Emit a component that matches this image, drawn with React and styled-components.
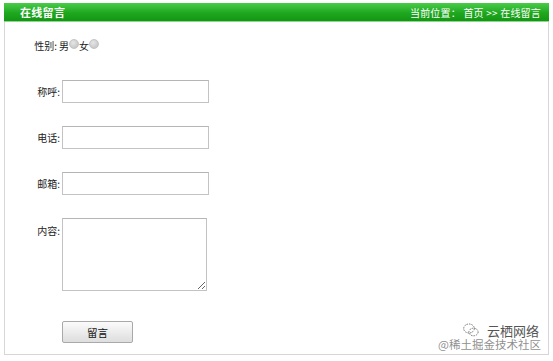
import React from "react";
import styled, { createGlobalStyle } from "styled-components";

const Global = createGlobalStyle`
  html, body { margin: 0; padding: 0; background: #fff; }
  body { font-family: "Noto Sans CJK SC", "Noto Sans", sans-serif; color: #222; }
`;

const Panel = styled.div`
  margin: 3px 0 0 4px;
  width: 543px;
  height: 351px;
  border: 1px solid #d6d6d6;
  border-top: none;
  position: relative;
  box-sizing: content-box;
`;

const Header = styled.div`
  height: 18px;
  margin: 0 -1px;
  display: flex;
  align-items: center;
  justify-content: space-between;
  padding: 0 8px 0 16px;
  background: linear-gradient(#4acc4a, #1fa81f 55%, #149614);
  color: #fff;
  border-bottom: 1px solid #8fd68f;
`;

const Title = styled.div`
  font-size: 11px;
  font-weight: 700;
  letter-spacing: 0.3px;
`;

const Crumb = styled.div`
  font-size: 10px;
  letter-spacing: 0.2px;
`;

const Form = styled.div`
  display: flex;
  flex-direction: column;
  gap: 23px;
  padding-top: 16px;
`;

const Row = styled.div`
  display: flex;
  align-items: ${(p) => (p.$top ? "flex-start" : "center")};
  min-height: ${(p) => p.$h || 16}px;
  margin-bottom: ${(p) => p.$mb || 0}px;
  margin-top: ${(p) => p.$mt || 0}px;
`;

const Label = styled.div`
  width: ${(p) => p.$w || 57}px;
  box-sizing: border-box;
  padding-right: 2px;
  text-align: right;
  font-size: 10px;
  line-height: 14px;
  padding-top: ${(p) => p.$pt || 0}px;
  white-space: nowrap;
  flex-shrink: 0;
`;

const Text = styled.span`
  font-size: 10px;
  line-height: 14px;
`;

const Radio = styled.span`
  display: inline-block;
  width: 8px;
  height: 8px;
  border-radius: 50%;
  background: radial-gradient(circle at 40% 35%, #e6e6e6, #bdbdbd);
  border: 1px solid #c4c4c4;
  margin: 0 0 5px 0;
  vertical-align: middle;
`;

const Input = styled.input`
  box-sizing: border-box;
  width: 147px;
  height: 23px;
  border: 1px solid #c3c3c3;
  border-top-color: #b5b5b5;
  margin: 0;
  padding: 0 3px;
  background: #fff;
  outline: none;
`;

const TextArea = styled.textarea`
  box-sizing: border-box;
  width: 145px;
  height: 73px;
  border: 1px solid #c3c3c3;
  border-top-color: #b5b5b5;
  margin: 0;
  padding: 2px;
  background: #fff;
  outline: none;
  display: block;
`;

const Button = styled.button`
  box-sizing: border-box;
  width: 71px;
  height: 22px;
  margin-left: 57px;
  border: 1px solid #a9a9a9;
  border-radius: 2px;
  background: linear-gradient(#fbfbfb, #ececec 50%, #dedede);
  font-family: "Noto Sans CJK SC", sans-serif;
  font-size: 10.5px;
  color: #111;
  padding: 0;
`;

const Watermark = styled.div`
  position: absolute;
  right: 7px;
  bottom: 4px;
  display: flex;
  flex-direction: column;
  align-items: flex-end;
  gap: 1px;
  pointer-events: none;
`;

const WmTop = styled.div`
  display: flex;
  align-items: center;
  gap: 8px;
  font-size: 13px;
  color: #555;
  line-height: 13px;
  margin-right: 2px;
`;

const WmBottom = styled.div`
  font-size: 11.5px;
  line-height: 12px;
  color: rgba(120,120,120,0.85);
`;

export default function App() {
  return (
    <>
      <Global />
      <Panel>
        <Header>
          <Title>在线留言</Title>
          <Crumb>当前位置：&nbsp;首页 &gt;&gt; 在线留言</Crumb>
        </Header>
        <Form>
          <Row $h={16} $mb={3}>
            <Label $w={54}>性别:</Label>
            <Text>男</Text>
            <Radio />
            <Text>女</Text>
            <Radio />
          </Row>
          <Row>
            <Label>称呼:</Label>
            <Input />
          </Row>
          <Row>
            <Label>电话:</Label>
            <Input />
          </Row>
          <Row>
            <Label>邮箱:</Label>
            <Input />
          </Row>
          <Row $top>
            <Label $pt={6}>内容:</Label>
            <TextArea />
          </Row>
          <Row $mt={7}>
            <Button>留言</Button>
          </Row>
        </Form>
        <Watermark>
          <WmTop>
            <svg width="16" height="14" viewBox="0 0 16 14" fill="none" stroke="#666" strokeWidth="0.9" strokeDasharray="1.5 1">
              <ellipse cx="6" cy="5.5" rx="5.3" ry="4.5" />
              <ellipse cx="10.5" cy="9" rx="4.6" ry="3.8" />
            </svg>
            <span>云栖网络</span>
          </WmTop>
          <WmBottom>@稀土掘金技术社区</WmBottom>
        </Watermark>
      </Panel>
    </>
  );
}
